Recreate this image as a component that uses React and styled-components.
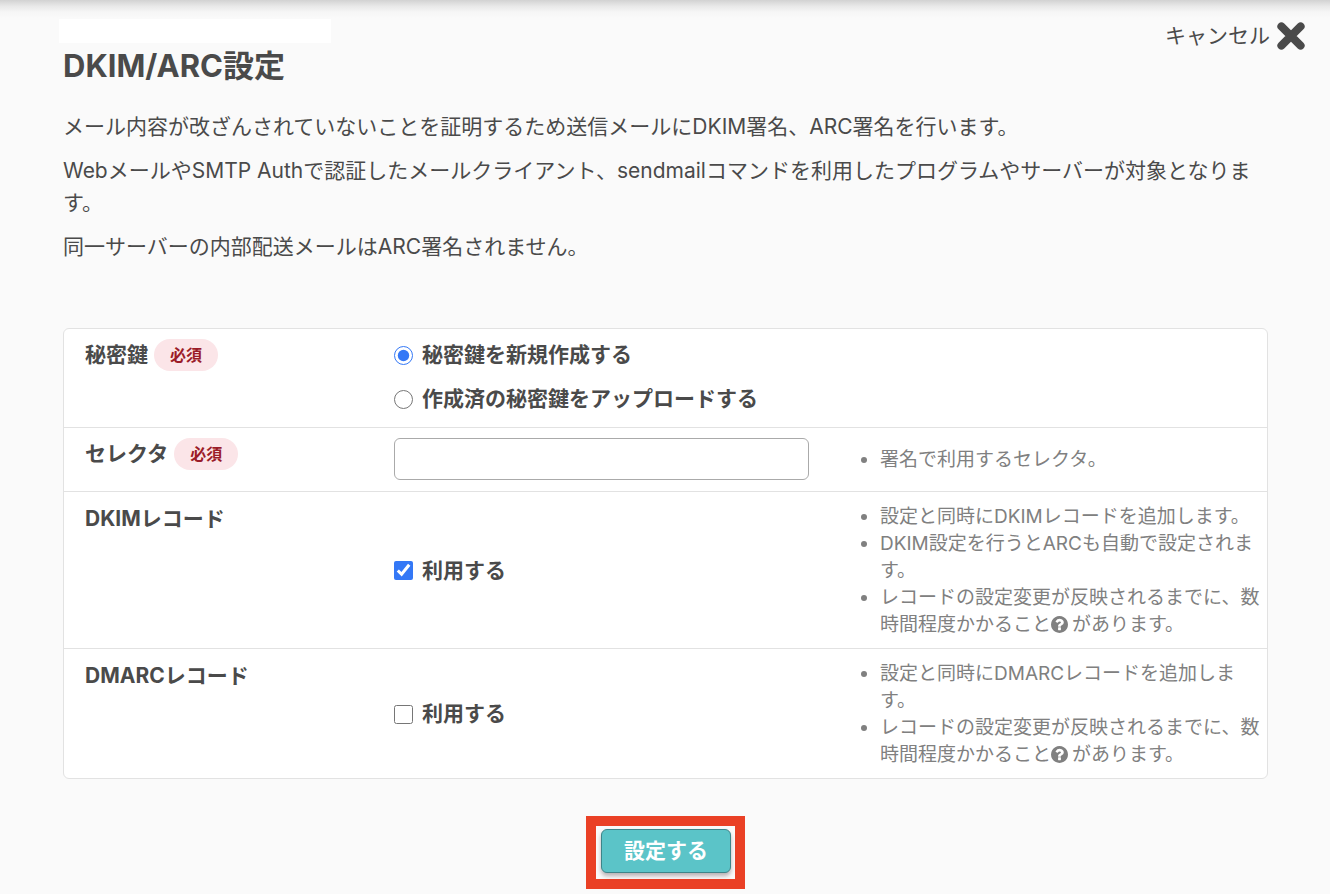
import React, { useState } from 'react';
import styled, { createGlobalStyle, css } from 'styled-components';

const GlobalStyle = createGlobalStyle`
  * {
    box-sizing: border-box;
  }
  body {
    margin: 0;
    background: #fafafa;
    color: #4a4a4a;
    font-family: Inter, "Noto Sans CJK JP", sans-serif;
    font-size: 21px;
    line-height: 32px;
  }
`;

const Page = styled.div`
  background: linear-gradient(#d2d2d2, #e8e8e8 6px, #f6f6f6 12px, #fafafa 18px);
`;

const Header = styled.header`
  display: flex;
  justify-content: space-between;
  align-items: flex-start;
  padding: 19px 25px 0 59px;
`;

const Breadcrumb = styled.div`
  width: 272px;
  height: 24px;
  background: #fff;
`;

const CancelLink = styled.a`
  display: flex;
  align-items: center;
  gap: 7px;
  color: #4a4a4a;
  text-decoration: none;
  line-height: 34px;

  svg {
    width: 28px;
    height: 28px;
  }
`;

const Main = styled.main`
  padding: 0 62px 5px 63px;
`;

const Title = styled.h1`
  margin: -10px 0 22px;
  font-size: 31px;
  line-height: 46px;
  font-weight: 700;
`;

const Text = styled.p`
  margin: 0 0 12px;
  line-height: 32px;
`;

const Intro = styled.div`
  margin-bottom: 65px;
`;

const Panel = styled.div`
  border: 1px solid #e2e2e2;
  border-radius: 6px;
  background: #fff;
`;

const Row = styled.div`
  display: grid;
  grid-template-columns: 309fr 415fr 453fr;
  align-items: center;
  padding: ${(props) => (props.$record ? '11px 5px 10px 21px' : '10px 5px 11px 21px')};

  & + & {
    border-top: 1px solid #e2e2e2;
  }
`;

const labelStyle = css`
  display: flex;
  align-items: center;
  align-self: start;
  gap: 6px;
  font-weight: 700;
`;

const RowTitle = styled.div`
  ${labelStyle}
`;

const RowLabel = styled.label`
  ${labelStyle}
`;

const Badge = styled.span`
  padding: 0 16px;
  border-radius: 16px;
  background: #fbe5e8;
  color: #9b1c28;
  font-size: 16px;
  line-height: 32px;
`;

const Options = styled.div`
  display: flex;
  flex-direction: column;
  gap: 12px;
  padding-bottom: 1px;
  grid-column: 2 / -1;
`;

const Option = styled.label`
  display: flex;
  align-items: center;
  gap: 9px;
  font-weight: 700;
`;

const Choice = styled.input`
  width: 19px;
  height: 19px;
  margin: 0;
  accent-color: #3478f6;
`;

const TextInput = styled.input`
  width: 100%;
  height: 42px;
  padding: 4px 12px;
  border: 1px solid #aaa;
  border-radius: 6px;
  background: #fff;
  color: inherit;
  font: inherit;
`;

const HelpList = styled.ul`
  margin: 0;
  padding: 0 0 0 71px;
  color: #808080;
  font-size: 19px;
  line-height: 27px;
`;

const HelpSvg = styled.svg`
  width: 17px;
  height: 17px;
  margin-right: 4px;
  vertical-align: -2px;
`;

const Actions = styled.div`
  display: flex;
  justify-content: center;
  margin-top: 37px;
`;

const Highlight = styled.div`
  padding: 3px 4px 6px 5px;
  border: 10px solid #ea4025;
`;

const SubmitButton = styled.button`
  display: block;
  height: 44px;
  padding: 0 22px;
  border: 1px solid #3d8589;
  border-radius: 6px;
  background: #5bc4c8;
  box-shadow: 0 3px 4px rgba(60, 40, 50, 0.35);
  color: #fff;
  font: inherit;
  font-weight: 700;
  cursor: pointer;
`;

function CloseIcon() {
  return (
    <svg
      viewBox="0 0 28 28"
      stroke="currentColor"
      strokeWidth="8"
      strokeLinecap="round"
      aria-hidden="true"
    >
      <path d="M4.400 4.400L23.600 23.600M23.600 4.400L4.400 23.600" />
    </svg>
  );
}

function HelpIcon() {
  return (
    <HelpSvg viewBox="128 128 1536 1536" fill="currentColor" aria-hidden="true">
      <path d="M1024 1376v-192q0-14-9-23t-23-9h-192q-14 0-23 9t-9 23v192q0 14 9 23t23 9h192q14 0 23-9t9-23zm256-672q0-88-55.500-163t-138.500-116-170-41q-243 0-371 213-15 24 8 42l132 100q7 6 19 6 16 0 25-12 53-68 86-92 34-24 86-24 48 0 85.500 26t37.500 59q0 38-20 61t-68 45q-63 28-115.500 86.500t-52.500 125.500v36q0 14 9 23t23 9h192q14 0 23-9t9-23q0-19 21.500-49.500t54.500-49.500q32-18 49-28.500t46-35 44.500-48 28-60.500 12.500-81zm384 192q0 209-103 385.500t-279.500 279.500-385.500 103-385.500-103-279.500-279.500-103-385.500 103-385.500 279.500-279.500 385.500-103 385.500 103 279.500 279.500 103 385.500z" />
    </HelpSvg>
  );
}

function DelayNote() {
  return (
    <li>
      レコードの設定変更が反映されるまでに、数時間程度かかること<HelpIcon />があります。
    </li>
  );
}

function App() {
  const [keyType, setKeyType] = useState('create');
  const [selector, setSelector] = useState('');
  const [dkim, setDkim] = useState(true);
  const [dmarc, setDmarc] = useState(false);

  return (
    <Page lang="ja">
      <GlobalStyle />
      <Header>
        <Breadcrumb />
        <CancelLink href="#cancel">
          キャンセル
          <CloseIcon />
        </CancelLink>
      </Header>
      <Main>
        <Title>DKIM/ARC設定</Title>
        <Intro>
          <Text>メール内容が改ざんされていないことを証明するため送信メールにDKIM署名、ARC署名を行います。</Text>
          <Text>
            WebメールやSMTP Authで認証したメールクライアント、sendmailコマンドを利用したプログラムやサーバーが対象となります。
          </Text>
          <Text>同一サーバーの内部配送メールはARC署名されません。</Text>
        </Intro>
        <form onSubmit={(e) => e.preventDefault()}>
          <Panel>
            <Row>
              <RowTitle id="key-title">
                秘密鍵<Badge>必須</Badge>
              </RowTitle>
              <Options role="radiogroup" aria-labelledby="key-title">
                <Option>
                  <Choice
                    type="radio"
                    name="key"
                    checked={keyType === 'create'}
                    onChange={() => setKeyType('create')}
                  />
                  秘密鍵を新規作成する
                </Option>
                <Option>
                  <Choice
                    type="radio"
                    name="key"
                    checked={keyType === 'upload'}
                    onChange={() => setKeyType('upload')}
                  />
                  作成済の秘密鍵をアップロードする
                </Option>
              </Options>
            </Row>
            <Row>
              <RowLabel htmlFor="selector">
                セレクタ<Badge>必須</Badge>
              </RowLabel>
              <TextInput
                id="selector"
                type="text"
                value={selector}
                onChange={(e) => setSelector(e.target.value)}
              />
              <HelpList>
                <li>署名で利用するセレクタ。</li>
              </HelpList>
            </Row>
            <Row $record>
              <RowTitle>DKIMレコード</RowTitle>
              <Option>
                <Choice type="checkbox" checked={dkim} onChange={(e) => setDkim(e.target.checked)} />
                利用する
              </Option>
              <HelpList>
                <li>設定と同時にDKIMレコードを追加します。</li>
                <li>DKIM設定を行うとARCも自動で設定されます。</li>
                <DelayNote />
              </HelpList>
            </Row>
            <Row $record>
              <RowTitle>DMARCレコード</RowTitle>
              <Option>
                <Choice type="checkbox" checked={dmarc} onChange={(e) => setDmarc(e.target.checked)} />
                利用する
              </Option>
              <HelpList>
                <li>設定と同時にDMARCレコードを追加します。</li>
                <DelayNote />
              </HelpList>
            </Row>
          </Panel>
          <Actions>
            <Highlight>
              <SubmitButton type="submit">設定する</SubmitButton>
            </Highlight>
          </Actions>
        </form>
      </Main>
    </Page>
  );
}

export default App;
